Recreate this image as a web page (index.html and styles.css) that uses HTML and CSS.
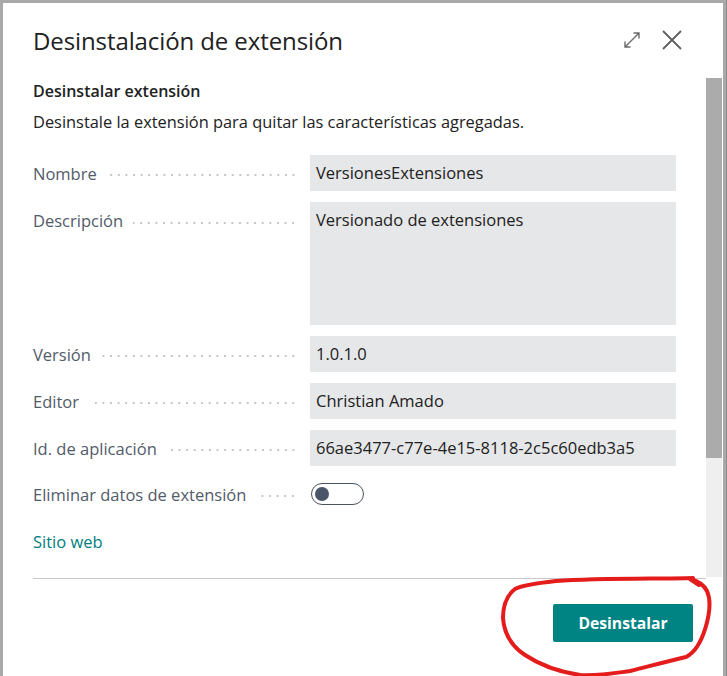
FILE: index.html
```html
<!DOCTYPE html>
<html lang="es">
<head>
<meta charset="utf-8">
<title>Desinstalación de extensión</title>
<link rel="stylesheet" href="styles.css">
</head>
<body>
<div class="page">
  <div class="dialog">
    <header class="dlg-header">
      <h1 class="dlg-title">Desinstalación de extensión</h1>
      <div class="dlg-actions">
        <svg class="ico-expand" width="18" height="18" viewBox="0 0 18 18" aria-hidden="true">
          <path d="M2 16 L16 2 M10.5 2 H16 V7.5 M2 10.5 V16 H7.5" fill="none" stroke="#6b6b6b" stroke-width="1.4"/>
        </svg>
        <svg class="ico-close" width="20" height="20" viewBox="0 0 20 20" aria-hidden="true">
          <path d="M1 1 L19 19 M19 1 L1 19" fill="none" stroke="#5f5f5f" stroke-width="1.8"/>
        </svg>
      </div>
    </header>

    <div class="dlg-body">
      <div class="content">
        <h2 class="sec-title">Desinstalar extensión</h2>
        <p class="sec-desc">Desinstale la extensión para quitar las características agregadas.</p>

        <div class="fields">
          <div class="label"><span>Nombre</span><i class="leader"></i></div>
          <div class="value">VersionesExtensiones</div>

          <div class="label top"><span>Descripción</span><i class="leader"></i></div>
          <div class="value tall">Versionado de extensiones</div>

          <div class="label"><span>Versión</span><i class="leader"></i></div>
          <div class="value">1.0.1.0</div>

          <div class="label"><span>Editor</span><i class="leader"></i></div>
          <div class="value">Christian Amado</div>

          <div class="label"><span>Id. de aplicación</span><i class="leader"></i></div>
          <div class="value">66ae3477-c77e-4e15-8118-2c5c60edb3a5</div>

          <div class="label"><span>Eliminar datos de extensión</span><i class="leader"></i></div>
          <div class="toggle-cell"><span class="toggle"><span class="knob"></span></span></div>
        </div>

        <a class="link" href="#">Sitio web</a>
      </div>
      <div class="scrollbar"><div class="thumb"></div></div>
    </div>

    <footer class="dlg-footer">
      <button class="btn-primary" type="button">Desinstalar</button>
    </footer>

    <svg class="scribble" width="230" height="110" viewBox="500 570 230 110" aria-hidden="true">
      <path d="M693 578 C660 579 600 578 556 581 C538 583 522 585 515 589 C506 596 503 607 503 618 C504 632 510 645 525 655 C540 665 560 672 580 675 C600 676 615 673 630 671 C650 666 665 662 686 657 C696 652 702 640 706 626 C710 612 711 600 707 591 C704 585 698 581 690 579 L699 585"
        fill="none" stroke="#e41c1c" stroke-width="4" stroke-linecap="round" stroke-linejoin="round"/>
    </svg>
  </div>
</div>
</body>
</html>
```

FILE: styles.css
```css
* { box-sizing: border-box; }

html, body {
  margin: 0;
  padding: 0;
}

body {
  width: 727px;
  height: 676px;
  overflow: hidden;
  background: #a9a9a9;
  font-family: "Open Sans", "Noto Sans", sans-serif;
  color: #212121;
}

.page {
  height: 676px;
  padding: 3px 4px 0 3px;
  border-right: 1px solid #8c8c8c;
}

.dialog {
  position: relative;
  width: 720px;
  height: 673px;
  background: #ffffff;
  display: flex;
  flex-direction: column;
}

.dlg-header {
  height: 75px;
  flex: none;
  display: flex;
  align-items: flex-start;
  justify-content: space-between;
  padding: 22px 41px 0 30px;
}

.dlg-title {
  margin: 0;
  font-size: 24px;
  line-height: 32px;
  font-weight: 400;
  color: #212121;
  letter-spacing: -0.1px;
}

.dlg-actions {
  display: flex;
  align-items: center;
  gap: 21px;
  padding-top: 5px;
}

.ico-expand, .ico-close { display: block; }

.dlg-body {
  height: 500px;
  flex: none;
  display: flex;
}

.content {
  width: 703px;
  padding: 3px 0 0 30px;
}

.sec-title {
  margin: 0;
  font-size: 16px;
  line-height: 20px;
  font-weight: 600;
  color: #212121;
}

.sec-desc {
  margin: 10px 0 0;
  font-size: 16.4px;
  line-height: 22px;
  color: #212121;
}

.fields {
  margin-top: 22px;
  display: grid;
  grid-template-columns: 277px 366px;
  grid-template-rows: 36px 123px 36px 36px 36px 34px;
  row-gap: 11px;
}

.label {
  display: flex;
  align-items: center;
  padding-right: 13px;
  font-size: 16.5px;
  color: #525b69;
  white-space: nowrap;
}

.label.top { align-items: flex-start; padding-top: 7px; }
.label.top .leader { margin-top: 13px; }

.leader {
  flex: 1;
  height: 2px;
  margin-left: 10px;
  margin-top: 4px;
  background-image: radial-gradient(circle, #c4c4c4 0.9px, transparent 1.1px);
  background-size: 7.6px 2px;
  background-position: right center;
  background-repeat: repeat-x;
}

.value {
  background: #e6e7e8;
  padding: 0 6px;
  font-size: 16.5px;
  line-height: 36px;
  color: #212121;
  white-space: nowrap;
  overflow: hidden;
}

.value.tall {
  height: 123px;
  line-height: 22px;
  padding-top: 7px;
}

.toggle-cell {
  display: flex;
  align-items: center;
  padding-left: 1px;
}

.toggle {
  display: flex;
  align-items: center;
  width: 53px;
  height: 22px;
  border: 1.5px solid #4a5260;
  border-radius: 11px;
  padding-left: 3px;
}

.knob {
  width: 14px;
  height: 14px;
  border-radius: 50%;
  background: #4a5568;
}

.link {
  display: block;
  width: max-content;
  margin-top: 20px;
  font-size: 16.5px;
  line-height: 22px;
  color: #008080;
  text-decoration: none;
}

.scrollbar {
  width: 16px;
  height: 499px;
  background: #efefef;
}

.thumb {
  height: 380px;
  background: #ababab;
}

.dlg-footer {
  flex: 1;
  margin: 0 17px 0 30px;
  border-top: 1px solid #c8c8c8;
  display: flex;
  justify-content: flex-end;
  align-items: flex-start;
  padding: 25px 13px 0 0;
}

.btn-primary {
  width: 140px;
  height: 38px;
  border: 0;
  border-radius: 2px;
  background: #008383;
  color: #ffffff;
  font-family: "Open Sans", "Noto Sans", sans-serif;
  font-size: 15.7px;
  font-weight: 700;
}

.scribble {
  position: absolute;
  left: 497px;
  top: 567px;
  pointer-events: none;
}
```
